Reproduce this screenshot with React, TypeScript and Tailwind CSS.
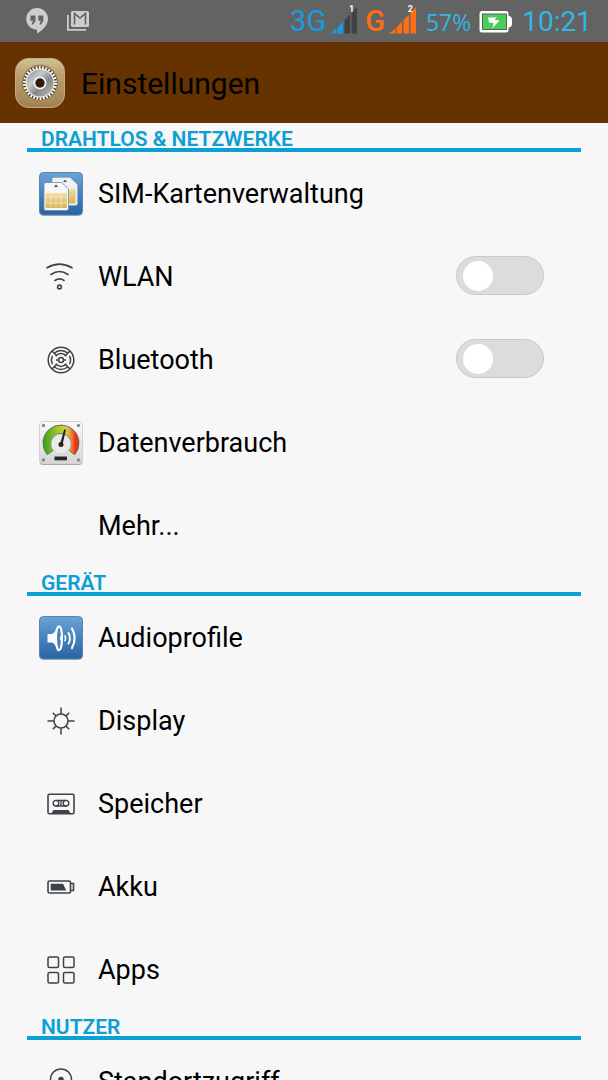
import { useState, type ReactNode } from "react";

const LINE = "#3f4347";

function SettingsIcon() {
  return (
    <svg viewBox="0 0 50 50" className="size-[50px] shrink-0" aria-hidden="true">
      <defs>
        <linearGradient id="tan" x1="0" y1="0" x2="0" y2="1">
          <stop offset="0" stopColor="#d3c19b" />
          <stop offset="0.35" stopColor="#b99e70" />
          <stop offset="1" stopColor="#a38250" />
        </linearGradient>
        <linearGradient id="steel" x1="0" y1="0" x2="1" y2="1">
          <stop offset="0" stopColor="#8d8f92" />
          <stop offset="0.35" stopColor="#c6c8ca" />
          <stop offset="0.6" stopColor="#85878a" />
          <stop offset="1" stopColor="#bcbec0" />
        </linearGradient>
      </defs>
      <rect x="0.5" y="0.5" width="49" height="49" rx="13" fill="url(#tan)" stroke="#c4b084" />
      <circle cx="25" cy="24.500" r="18" fill="#86673a" opacity="0.6" />
      <circle cx="25" cy="25" r="17" fill="#4d3717" />
      <circle cx="25" cy="25" r="15.500" fill="none" stroke="#f4f4f4" strokeWidth="3" strokeDasharray="1.900 1.346" />
      <circle cx="25" cy="25" r="14.500" fill="#eeeeee" />
      <circle cx="25" cy="25" r="13.500" fill="url(#steel)" />
      <circle cx="25" cy="25" r="6.500" fill="#f3f3f3" />
      <circle cx="25" cy="25" r="4.700" fill="#2d1c0b" />
    </svg>
  );
}

function TileDefs() {
  return (
    <defs>
      <linearGradient id="tile" x1="0" y1="0" x2="0" y2="1">
        <stop offset="0" stopColor="#6ba3d6" />
        <stop offset="0.5" stopColor="#4683bd" />
        <stop offset="1" stopColor="#2b62a0" />
      </linearGradient>
      <linearGradient id="gold" x1="0" y1="0" x2="0" y2="1">
        <stop offset="0" stopColor="#f0dda0" />
        <stop offset="1" stopColor="#d9b65c" />
      </linearGradient>
    </defs>
  );
}

function SimIcon() {
  return (
    <svg viewBox="0 0 44 44" className="size-11" aria-hidden="true">
      <TileDefs />
      <rect x="0.5" y="1" width="43" height="43" rx="4" fill="#b9c0c8" />
      <rect x="0.5" y="0.5" width="43" height="42.5" rx="4" fill="url(#tile)" stroke="#5387b8" />
      <path d="M15 5.5h16l7.500 7v19q0 2-2 2H15q-2 0-2-2v-24q0-2 2-2Z" fill="#f0f1f2" stroke="#93a7ba" strokeWidth="0.6" />
      <path d="M26 7.500l2 2.500h-4z" fill="#555" />
      <rect x="26" y="17" width="10.5" height="14.5" rx="1" fill="url(#gold)" />
      <path d="M7 10.500h15.500l7 6.500v19.500q0 2-2 2H7q-2 0-2-2v-24q0-2 2-2Z" fill="#f7f7f7" stroke="#718aa3" strokeWidth="0.8" />
      <path d="M17 12.500l2 2.500h-4z" fill="#444" />
      <rect x="6.500" y="21" width="21.500" height="15" rx="1" fill="url(#gold)" />
      <path d="M7 25h21M7 31h21M12 22v13M17 25v10M22 22v13" stroke="#f6e9bf" strokeWidth="0.8" />
    </svg>
  );
}

function WifiIcon() {
  return (
    <svg viewBox="0 0 30 30" className="size-[30px]" fill="none" stroke={LINE} strokeWidth="1.600" strokeLinecap="round" aria-hidden="true">
      <path d="M1 5.800Q13.500-1.500 26 5.800M5 12.500Q13.500 6.500 22 12.500M9 18.500Q13.500 15.300 18 18.500" />
      <circle cx="13.500" cy="25" r="1.900" />
    </svg>
  );
}

function BluetoothIcon() {
  return (
    <svg viewBox="0 0 28 28" className="size-7" fill="none" stroke={LINE} strokeWidth="1.500" aria-hidden="true">
      <circle cx="14" cy="14" r="12.800" />
      <path d="M7.300 7.300A9.500 9.500 0 0 1 20.700 7.300M7.300 20.700A9.500 9.500 0 0 0 20.700 20.700M5.500 9.800A9.500 9.500 0 0 0 5.500 18.200M22.500 9.800A9.500 9.500 0 0 1 22.500 18.200" />
      <path d="M5 5l4.500 4.500M23 5l-4.500 4.500M5 23l4.500-4.500M23 23l-4.500-4.500" />
      <path d="M8.800 10.200A6.500 6.500 0 0 1 19.200 10.200M8.800 17.800A6.500 6.500 0 0 0 19.200 17.800" />
      <circle cx="14" cy="14" r="2.500" />
      <path d="M9 14h2.500M16.500 14H19" />
    </svg>
  );
}

function GaugeIcon() {
  return (
    <svg viewBox="0 0 44 44" className="size-11" aria-hidden="true">
      <defs>
        <linearGradient id="plate" x1="0" y1="0" x2="0" y2="1">
          <stop offset="0" stopColor="#fafafa" />
          <stop offset="1" stopColor="#d5d5d5" />
        </linearGradient>
        <linearGradient id="dial" x1="0" y1="0" x2="1" y2="0">
          <stop offset="0" stopColor="#3b9c1e" />
          <stop offset="0.4" stopColor="#9fcb2b" />
          <stop offset="0.65" stopColor="#d9d443" />
          <stop offset="0.8" stopColor="#f17c30" />
          <stop offset="0.9" stopColor="#e93417" />
        </linearGradient>
      </defs>
      <rect x="0.5" y="1" width="43" height="43" rx="3.500" fill="#aaa" />
      <rect x="0.5" y="0.5" width="43" height="42" rx="3.500" fill="url(#plate)" stroke="#d2d2d2" />
      {[[4.500, 4.500], [39.500, 4.500], [4.500, 39], [39.500, 39]].map(([x, y]) => (
        <circle key={`${x}-${y}`} cx={x} cy={y} r="1.700" fill="#8b8b8b" />
      ))}
      <path d="M8.300 33.700A18 18 0 1 1 35.700 33.700L29.500 29A10 10 0 1 0 14.500 29Z" fill="url(#dial)" stroke="#5d6556" strokeWidth="0.900" />
      <circle cx="22" cy="23" r="9.900" fill="#e9e9e9" stroke="#c4c4c4" strokeWidth="0.600" />
      <path d="M25.200 8.500h1.800L23.300 24.500l-2.500-.8Z" fill="#222" />
      <circle cx="22" cy="23.500" r="2.500" fill="#222" />
      <rect x="15.500" y="35.500" width="12.500" height="3.800" fill="#272727" />
    </svg>
  );
}

function AudioIcon() {
  return (
    <svg viewBox="0 0 44 44" className="size-11" aria-hidden="true">
      <TileDefs />
      <rect x="0.5" y="1" width="43" height="43" rx="4" fill="#b9c0c8" />
      <rect x="0.5" y="0.5" width="43" height="42.500" rx="4" fill="url(#tile)" stroke="#5387b8" />
      <path d="M8.500 18h4.500Q17 16 18.500 10h2v25h-2Q17 28 13 26.500H8.500Z" fill="#fff" />
      <ellipse cx="20" cy="22.300" rx="3" ry="12" fill="#4a84bc" stroke="#fff" strokeWidth="2" />
      <path d="M21 19.500q2 2.800 0 5.600Z" fill="#fff" />
      <g fill="none" stroke="#fff" strokeLinecap="round">
        <path d="M26 20q1.400 2.300 0 4.600" strokeWidth="1.700" />
        <path d="M29.500 17q3 5.300 0 10.600" strokeWidth="1.900" />
        <path d="M33 12.500q5.200 9.800 0 19.600" strokeWidth="2.200" />
      </g>
    </svg>
  );
}

function DisplayIcon() {
  return (
    <svg viewBox="0 0 28 28" className="size-7" fill="none" stroke={LINE} strokeWidth="1.500" aria-hidden="true">
      <circle cx="14" cy="14" r="7" />
      <path d="M14 .5v6.500M14 21v6.500M.5 14H7M21 14h6.500M5.800 5.800l3.100 3.100M19.100 19.100l3.100 3.100M22.200 5.800l-3.100 3.100M8.900 19.100l-3.100 3.100" />
    </svg>
  );
}

function StorageIcon() {
  return (
    <svg viewBox="0 0 28 22" className="h-[22px] w-7" fill="none" stroke={LINE} strokeWidth="1.600" aria-hidden="true">
      <rect x="1" y="1.200" width="26" height="19.600" rx="1.500" />
      <path d="M9 7.500h10M9 13h10" strokeWidth="1.300" />
      <circle cx="9" cy="10.200" r="2.800" strokeWidth="1.400" />
      <circle cx="19" cy="10.200" r="2.800" strokeWidth="1.400" />
      <path d="M14 7.500v5.500" strokeWidth="1.300" />
      <path d="M4 21l2.500-4h15l2.500 4Z" fill={LINE} stroke="none" />
    </svg>
  );
}

function BatteryIcon() {
  return (
    <svg viewBox="0 0 28 14" className="h-3.5 w-7" fill="none" stroke={LINE} strokeWidth="1.600" aria-hidden="true">
      <rect x="1" y="1" width="22.500" height="12" rx="1.500" />
      <path d="M23.500 3.500h3v7h-3" />
      <path d="M3.700 3.700h12.300l3.300 6.800H3.700Z" fill={LINE} stroke="none" />
    </svg>
  );
}

function AppsIcon() {
  return (
    <svg viewBox="0 0 28 28" className="size-7" fill="none" stroke={LINE} strokeWidth="1.500" aria-hidden="true">
      <rect x="1" y="1" width="10.500" height="10.500" rx="1.500" />
      <rect x="16.500" y="1" width="10.500" height="10.500" rx="1.500" />
      <rect x="1" y="16.500" width="10.500" height="10.500" rx="1.500" />
      <rect x="16.500" y="16.500" width="10.500" height="10.500" rx="1.500" />
    </svg>
  );
}

function LocationIcon() {
  return (
    <svg viewBox="0 0 28 28" className="size-7" fill="none" stroke={LINE} strokeWidth="1.500" aria-hidden="true">
      <path d="M14 27C9 21 3.500 17 3.500 11.500a10.500 10.500 0 0 1 21 0C24.500 17 19 21 14 27Z" />
      <circle cx="14" cy="11.500" r="2" fill={LINE} />
    </svg>
  );
}

function Signal({ label, filled, color }: { label: string; filled: number; color: string }) {
  const bars = ["M0 26.500L6.500 21.500V26.500Z", "M7.500 20.500L13 14.500V26.500H7.500Z", "M14.500 13L20 7.500V26.500H14.500Z", "M21.500 6L27 0V26.500H21.500Z"];
  return (
    <span className="relative h-7 w-[27px]">
      <svg viewBox="0 0 27 28" className="h-7 w-[27px]" aria-hidden="true">
        {bars.map((d, i) => (
          <path key={d} d={d} fill={i < filled ? color : "#3f4246"} />
        ))}
      </svg>
      <span className="absolute -top-1 right-[3px] text-[9px] leading-3 font-bold text-white">{label}</span>
    </span>
  );
}

function StatusBar() {
  return (
    <div className="flex h-[42px] shrink-0 items-center justify-between bg-[#636363] pr-4 pl-[26px]">
      <div className="flex items-center gap-[19px]">
        <svg viewBox="0 0 22 26" className="h-[26px] w-[22px]" aria-hidden="true">
          <path d="M11 0a11 10.800 0 0 1 11 10.800c0 6-4.500 11.200-11 14.700v-3.900A10.800 10.800 0 0 1 11 0Z" fill="#cdcdcd" />
          <path d="M4.500 7.500h5v5.300l-2.200 3.700H5.500l1.500-3.700H4.500ZM12.300 7.500h5v5.300l-2.200 3.700h-1.800l1.500-3.700h-2.500Z" fill="#636363" />
        </svg>
        <svg viewBox="0 0 22 20" className="h-5 w-[22px]" aria-hidden="true">
          <path d="M.9 4v14.900H19" fill="none" stroke="#cdcdcd" strokeWidth="1.800" />
          <rect x="4" y="0" width="18" height="16" rx="1.500" fill="#cdcdcd" />
          <path d="M7.500 13.500v-11l5.500 4.500 5.500-4.500v11" fill="none" stroke="#636363" strokeWidth="1.600" />
        </svg>
      </div>
      <div className="flex items-center">
        <span className="mr-1 text-[29px] leading-10 text-[#169ce0]">3G</span>
        <Signal label="1" filled={2} color="#169ce0" />
        <span className="mr-1 ml-2 text-[29px] leading-10 font-medium text-[#ff6e12]">G</span>
        <Signal label="2" filled={4} color="#ff6e12" />
        <span className="mt-0.5 ml-2.5 font-['Open_Sans',sans-serif] text-[23px] leading-10 text-[#33b5e5]">57%</span>
        <svg viewBox="0 0 33 22" className="mt-0.5 ml-2 h-[22px] w-[33px]" aria-hidden="true">
          <path d="M3 0h24q2.500 0 2.500 3v2h1Q33 6 33 8v5.500q0 2-2.500 3h-1v2.500q0 2.500-2.500 2.500H3Q.5 21.500.5 19V3Q.5 0 3 0Z" fill="#fff" />
          <rect x="3.500" y="3" width="24" height="15.500" fill="#4dcc5c" stroke="#53665a" />
          <path d="M9 6.500h8.500l-2 2.500 5 .5-7 7.500 1-5-4.500-.5Z" fill="#fff" />
        </svg>
        <span className="mt-0.5 ml-2.5 text-[28px] leading-10 text-[#33b5e5]">10:21</span>
      </div>
    </div>
  );
}

function Toggle({ label }: { label: string }) {
  const [on, setOn] = useState(false);
  return (
    <input
      type="checkbox"
      role="switch"
      aria-label={label}
      checked={on}
      onChange={() => setOn(!on)}
      className="mr-[37px] mb-0.5 flex h-[39px] w-[88px] appearance-none items-center rounded-full border border-[#c9c9c9] bg-[#dcdcdc] px-1.5 before:size-[30px] before:rounded-full before:bg-white checked:justify-end checked:bg-[#33b5e5]"
    />
  );
}

type Item = { label: string; icon?: ReactNode; toggle?: boolean };

const sections: { title: string; items: Item[] }[] = [
  {
    title: "DRAHTLOS & NETZWERKE",
    items: [
      { label: "SIM-Kartenverwaltung", icon: <SimIcon /> },
      { label: "WLAN", icon: <WifiIcon />, toggle: true },
      { label: "Bluetooth", icon: <BluetoothIcon />, toggle: true },
      { label: "Datenverbrauch", icon: <GaugeIcon /> },
      { label: "Mehr..." },
    ],
  },
  {
    title: "GERÄT",
    items: [
      { label: "Audioprofile", icon: <AudioIcon /> },
      { label: "Display", icon: <DisplayIcon /> },
      { label: "Speicher", icon: <StorageIcon /> },
      { label: "Akku", icon: <BatteryIcon /> },
      { label: "Apps", icon: <AppsIcon /> },
    ],
  },
  { title: "NUTZER", items: [{ label: "Standortzugriff", icon: <LocationIcon /> }] },
];

function Row({ label, icon, toggle }: Item) {
  return (
    <li className="flex h-[83px] items-center">
      <a href="#" className="flex h-full flex-1 items-center pl-3">
        <span className="flex w-11 justify-center">{icon}</span>
        <span className="ml-[15px] text-[27px] leading-9 text-black">{label}</span>
      </a>
      {toggle && <Toggle label={label} />}
    </li>
  );
}

export default function App() {
  return (
    <div className="flex h-screen flex-col overflow-hidden bg-[#f7f7f7] font-[Roboto,sans-serif]">
      <StatusBar />
      <header className="flex h-[81px] shrink-0 items-center gap-4 bg-[#663300] px-[15px]">
        <SettingsIcon />
        <h1 className="pt-0.5 text-[30px] leading-10 text-black">Einstellungen</h1>
      </header>
      <main className="min-h-0 flex-1 overflow-hidden px-[27px]">
        {sections.map((section) => (
          <section key={section.title}>
            <h2 className="h-[29px] border-b-4 border-[#0c9fd4] pt-1 pl-3.5 text-[21px] leading-6 font-semibold text-[#0c9fd4]">
              {section.title}
            </h2>
            <ul>
              {section.items.map((item) => (
                <Row key={item.label} {...item} />
              ))}
            </ul>
          </section>
        ))}
      </main>
    </div>
  );
}
